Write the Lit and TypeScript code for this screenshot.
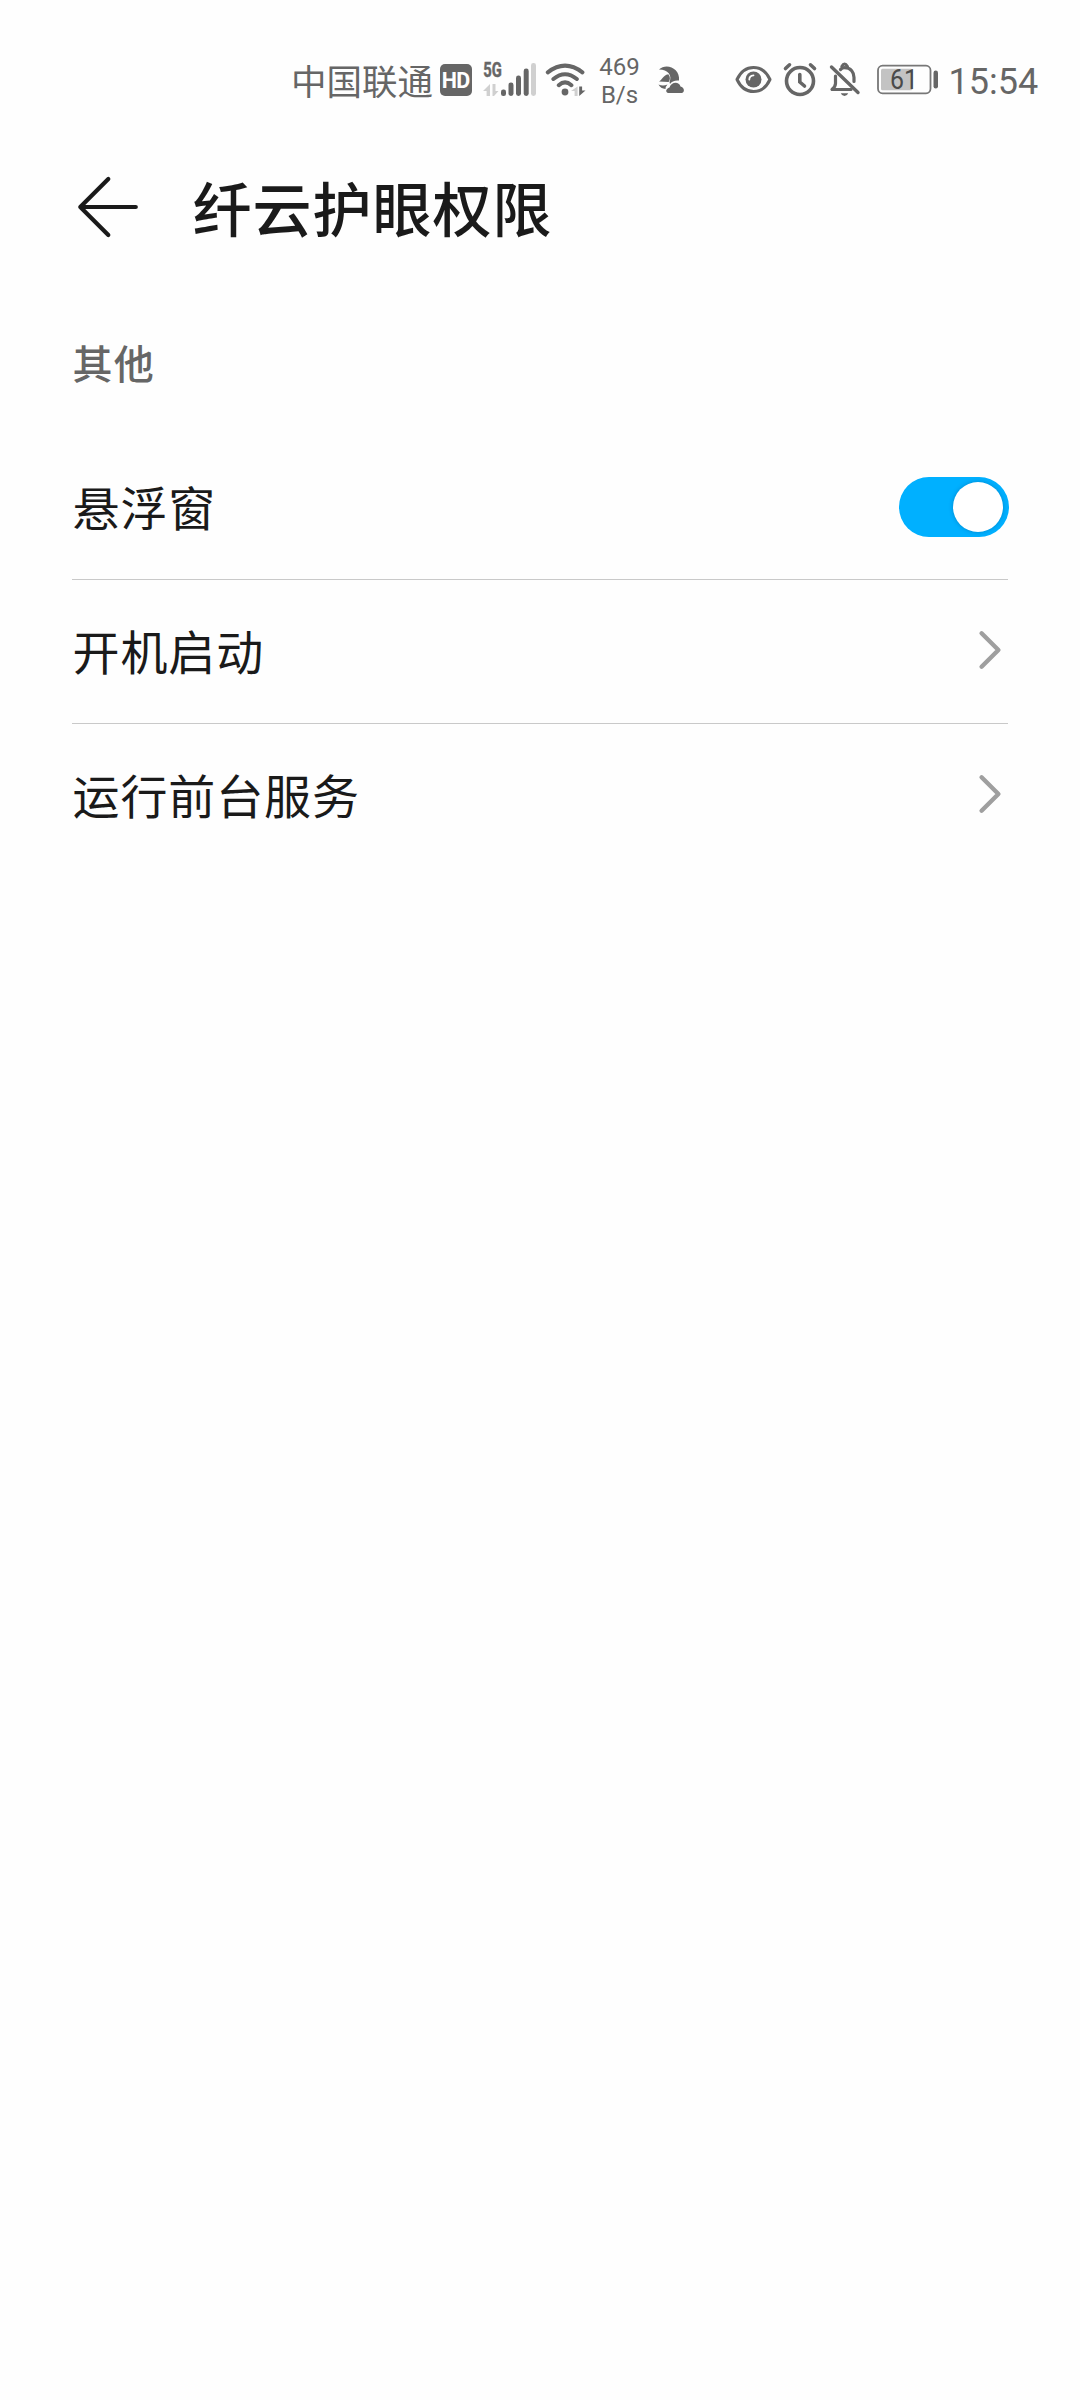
import { LitElement, html, css } from "lit";
import { customElement, property } from "lit/decorators.js";

interface PermissionItem {
  label: string;
  kind: "switch" | "link";
}

const ITEMS: PermissionItem[] = [
  { label: "悬浮窗", kind: "switch" },
  { label: "开机启动", kind: "link" },
  { label: "运行前台服务", kind: "link" },
];

@customElement("status-bar")
class StatusBar extends LitElement {
  static styles = css`
    :host {
      display: block;
      color: #666;
      font-family: Roboto, "Noto Sans CJK SC", sans-serif;
    }
    .bar {
      display: flex;
      align-items: center;
      height: 160px;
      box-sizing: border-box;
      padding-left: 291px;
    }
    svg {
      display: block;
      flex: none;
    }
    .carrier {
      flex: none;
      width: 148.5px;
      font-size: 35.5px;
      line-height: 52px;
      white-space: nowrap;
      padding-top: 5px;
    }
    .hd {
      flex: none;
      width: 32.5px;
      height: 32px;
      border-radius: 5px;
      background: #666;
      color: #fff;
      font: 700 21.5px/33px Roboto, sans-serif;
      letter-spacing: -0.5px;
      text-align: center;
    }
    .signal {
      margin-left: 10px;
    }
    .wifi {
      margin-left: 6px;
    }
    .speed {
      flex: none;
      width: 42px;
      margin-left: 12.5px;
      font-size: 24px;
      line-height: 28px;
      text-align: center;
      padding-top: 2px;
    }
    .night {
      margin-left: 16.5px;
    }
    .eye {
      margin-left: 50px;
    }
    .alarm {
      margin-left: 10px;
    }
    .bell {
      margin-left: 11px;
    }
    .battery {
      margin-left: 15.5px;
    }
    .time {
      margin-left: 10px;
      font-size: 36px;
      line-height: 42px;
      padding-top: 3px;
    }
    .tech {
      font: 700 19.5px Roboto, sans-serif;
    }
    .level {
      font: 400 27px Roboto, sans-serif;
      fill: #4a4a4a;
    }
  `;

  render() {
    return html`
      <div class="bar">
        <span class="carrier">中国联通</span>
        <span class="hd">HD</span>
        <svg class="signal" width="56" height="40" viewBox="482 60 56 40" fill="#666">
          <text class="tech" x="483.3" y="77" textLength="18.5" lengthAdjust="spacingAndGlyphs" stroke="#666" stroke-width=".5">5G</text>
          <g fill="#d0d0d0">
            <path d="M490 84v12h-3.400v-5H483zM492.500 84v12h1.500l4.500-5h-3V84z" />
            <rect x="531" y="63" width="5" height="33" rx="2.4" />
          </g>
          <rect x="501" y="89.5" width="5" height="6.5" rx="2.2" />
          <rect x="508.5" y="82.5" width="5" height="13.5" rx="2.4" />
          <rect x="516" y="75.5" width="5" height="20.5" rx="2.4" />
          <rect x="523.7" y="68.5" width="5" height="27.5" rx="2.4" />
        </svg>
        <svg class="wifi" width="42" height="40" viewBox="544 60 42 40" fill="none" stroke="#666" stroke-width="4" stroke-linecap="round">
          <path d="M547.8 72.3Q565 59 582.4 72.3M553.4 79Q565 69.5 576.8 79M558.8 85.2Q565 79.5 571.4 85.2" />
          <circle cx="565" cy="92" r="3.4" fill="#666" stroke="none" />
          <path d="M577.6 86.5V96h-3v-5H571z" fill="#d0d0d0" stroke="none" />
          <path d="M579.2 86.500v9.500l6.300-5.500h-3.400V86.500z" fill="#666" stroke="none" />
        </svg>
        <span class="speed">469<br />B/s</span>
        <svg class="night" width="28" height="40" viewBox="658 60 28 40" fill="#666">
          <path d="M660 69.500C667 62.500 681.500 68 680 80.500C676 80 672.500 81.500 671 84L670.500 82C673.500 75.500 669 69.500 660 69.500Z" />
          <path d="M660 81.500C663.500 80 663.500 75.500 669.300 74.300C671.500 77 671.300 80 669.600 82Q665 81.500 660 81.500Z" />
          <path d="M659.500 84.500Q664 86.500 668.500 84.500Q666.500 86.500 666.500 89Q661.500 88.500 659.500 84.500Z" />
          <path d="M669 93C666 92 667 88.500 670.500 87.500C672 82 680 81 681.500 86.500C685.500 87.500 686 92 683 93Z" />
        </svg>
        <svg class="eye" width="37" height="40" viewBox="735.5 60 37 40" fill="none" stroke="#666" stroke-width="3">
          <path d="M737.500 79.500C745 63.500 763 63.500 770.500 79.500C763 95.500 745 95.500 737.500 79.500Z" stroke-linejoin="round" />
          <circle cx="754" cy="79.500" r="8" fill="#666" stroke="none" />
          <path d="M749.800 79.500Q749.800 75.500 754 75.300" stroke="#fff" stroke-width="1.8" stroke-linecap="round" />
        </svg>
        <svg class="alarm" width="36" height="40" viewBox="782.5 60 36 40" fill="none" stroke="#666" stroke-width="3.6" stroke-linecap="round">
          <circle cx="800.5" cy="81" r="13.500" />
          <path d="M800.300 74.500v7.500l4.700 4M786 68.500l4-3.700M815 68.500l-4-3.700" />
        </svg>
        <svg class="bell" width="32" height="40" viewBox="830 60 32 40" fill="none" stroke="#666" stroke-width="3.2" stroke-linecap="round" stroke-linejoin="round">
          <path d="M832.500 67L859 92.500" stroke-width="3.4" />
          <path d="M836.500 76V83.500Q836.500 86.500 833 89.500H852M841.500 69.500C843 68 844.500 67.700 845.500 67.700C852 67.700 855 72.500 855 77.500V81.500" />
          <path d="M842.800 66.500Q845.500 61.500 848.500 66.500" stroke-width="3" />
          <path d="M841.800 93.300h7.400q-1 2.700-3.700 2.700t-3.700-2.700z" fill="#666" stroke="none" />
        </svg>
        <svg class="battery" width="62" height="40" viewBox="877.5 60 62 40">
          <rect x="878.5" y="65.7" width="52.5" height="27.6" rx="4.5" fill="none" stroke="#777" stroke-width="1.8" />
          <rect x="881.5" y="68.7" width="31.5" height="21.6" rx="1.5" fill="#c3c3c3" />
          <rect x="934" y="70.5" width="4.5" height="18" rx="2.2" fill="#666" />
          <text class="level" x="890.5" y="89" textLength="28" lengthAdjust="spacingAndGlyphs">61</text>
        </svg>
        <span class="time">15:54</span>
      </div>
    `;
  }
}

@customElement("permission-row")
class PermissionRow extends LitElement {
  @property() label = "";
  @property() kind: PermissionItem["kind"] = "link";
  @property({ type: Boolean }) divided = false;

  static styles = css`
    :host {
      display: block;
    }
    .row {
      display: flex;
      align-items: center;
      justify-content: space-between;
      box-sizing: border-box;
      height: 144px;
      border-bottom: 1px solid transparent;
    }
    .divided {
      border-bottom-color: #c9c9c9;
    }
    .label {
      margin: 0 0 3px 0.5px;
      font-size: 47px;
      letter-spacing: 0.9px;
      line-height: 72px;
      color: #1a1a1a;
    }
    .switch {
      box-sizing: border-box;
      width: 110px;
      height: 60px;
      margin: 0 -1px 1px 0;
      padding: 5px 6px;
      border-radius: 30px;
      background: #00b0ff;
      display: flex;
      justify-content: flex-end;
    }
    .knob {
      width: 50px;
      height: 50px;
      border-radius: 50%;
      background: #fff;
      box-shadow: 0 0 4px rgba(0, 60, 110, 0.35);
    }
    .chevron {
      display: block;
      margin: 0 5px 3px 0;
    }
  `;

  render() {
    return html`
      <div class="row ${this.divided ? "divided" : ""}">
        <span class="label">${this.label}</span>
        ${this.kind === "switch"
          ? html`<span class="switch" role="switch" aria-checked="true"><span class="knob"></span></span>`
          : html`<svg class="chevron" width="26" height="40" viewBox="0 0 26 40" fill="none" stroke="#9f9f9f" stroke-width="4.4" stroke-linecap="round" stroke-linejoin="round">
              <path d="M4.600 3.300L21.400 20L4.600 36.700" />
            </svg>`}
      </div>
    `;
  }
}

@customElement("app-root")
class AppRoot extends LitElement {
  static styles = css`
    :host {
      display: block;
      min-height: 2400px;
      background: #fefefe;
      font-family: "Noto Sans CJK SC", sans-serif;
    }
    .header {
      display: flex;
      align-items: center;
      height: 96px;
      padding-left: 76px;
    }
    .back {
      display: block;
      flex: none;
      width: 64px;
      height: 64px;
      margin-bottom: 2px;
    }
    .title {
      margin: 0 0 2px 52.5px;
      font-size: 59px;
      letter-spacing: 1px;
      line-height: 84px;
      font-weight: 500;
      color: #1a1a1a;
    }
    .section {
      margin: 0;
      height: 180px;
      box-sizing: border-box;
      padding: 76px 72.5px 0;
      font-size: 40px;
      letter-spacing: 1.2px;
      line-height: 60px;
      font-weight: 500;
      color: #666;
    }
    .list {
      padding: 0 72px;
    }
  `;

  render() {
    return html`
      <status-bar></status-bar>
      <header class="header">
        <svg class="back" viewBox="76 175 64 64" fill="none" stroke="#1a1a1a" stroke-width="4.2" stroke-linecap="round" stroke-linejoin="round">
          <path d="M80.300 207H135.800M108.300 179L80.300 207L108.300 235" />
        </svg>
        <h1 class="title">纤云护眼权限</h1>
      </header>
      <h2 class="section">其他</h2>
      <main class="list">
        ${ITEMS.map(
          (item, i) => html`<permission-row
            .label=${item.label}
            .kind=${item.kind}
            ?divided=${i < ITEMS.length - 1}
          ></permission-row>`
        )}
      </main>
    `;
  }
}
